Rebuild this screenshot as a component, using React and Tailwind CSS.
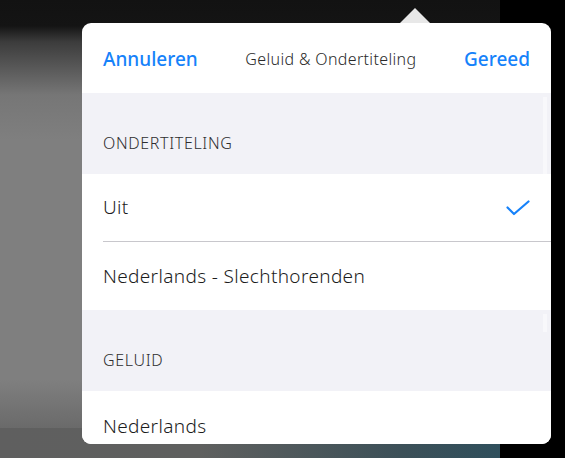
const CheckIcon = ({ className }) => (
  <svg className={className} viewBox="0 0 24 16" fill="none" stroke="currentColor" strokeWidth="2.2" strokeLinecap="round" strokeLinejoin="round">
    <path d="M1.5 7.5l6.5 6.5L22.5 1.5" />
  </svg>
);

const SectionHeader = ({ label, thumb }) => (
  <div className="relative h-[81px] bg-[#f2f2f7] flex items-end pl-[21px] pb-[21px]">
    <span className="text-[16px] leading-[20px] tracking-[0.65px] font-[350] text-[#2e2e30] uppercase">{label}</span>
    {thumb && <div className={`absolute right-[4px] top-[4px] w-[4px] ${thumb} bg-[#f8f8fb]`} />}
  </div>
);

const Row = ({ label, checked, height }) => (
  <div className={`flex items-center justify-between pl-[21px] pr-[21px] bg-white ${height}`}>
    <span className="text-[19px] font-[350] tracking-[0.35px] text-[#1c1c1c]">{label}</span>
    {checked && <CheckIcon className="w-[24px] h-[16px] text-[#1682fa]" />}
  </div>
);

export default function App() {
  return (
    <div
      className="relative w-[565px] h-[458px] overflow-hidden bg-black"
      style={{ fontFamily: '"Noto Sans", "Open Sans", sans-serif' }}
    >
      {/* video frame behind the popover */}
      <div className="absolute left-0 top-0 w-[500px] h-full bg-[linear-gradient(to_bottom,#121212_0px,#141414_26px,#3c3c3c_42px,#767676_95px,#7f7f7f_140px,#7f7f7f_380px,#5d5d5d_458px)]" />
      <div className="absolute left-0 bottom-0 w-[500px] h-[30px] bg-[linear-gradient(to_right,#5f5f5f_0%,#5f605f_40%,#3c5058_80%,#2f4f5c_100%)]" />

      {/* popover arrow */}
      <div className="absolute left-[399px] top-[8px] w-0 h-0 border-l-[16px] border-r-[16px] border-b-[16px] border-l-transparent border-r-transparent border-b-[#e8e8e8]" />

      {/* popover */}
      <div className="absolute left-[82px] top-[23px] w-[469px] h-[421px] rounded-[9px] bg-white overflow-hidden">
        <div className="h-[70px] flex items-center justify-between px-[21px] pt-[2px]">
          <span className="text-[19px] font-medium text-[#1682fa]">Annuleren</span>
          <span className="text-[16px] font-[350] tracking-[0.35px] text-[#2a2a2a]">Geluid &amp; Ondertiteling</span>
          <span className="text-[19px] font-medium text-[#1682fa]">Gereed</span>
        </div>

        <SectionHeader label="Ondertiteling" thumb="h-[77px]" />
        <Row label="Uit" checked height="h-[67px]" />
        <div className="ml-[21px] h-px bg-[#c8c7cc]" />
        <Row label="Nederlands - Slechthorenden" height="h-[68px]" />
        <SectionHeader label="Geluid" thumb="h-[18px]" />
        <Row label="Nederlands" height="h-[70px]" />
      </div>
    </div>
  );
}
